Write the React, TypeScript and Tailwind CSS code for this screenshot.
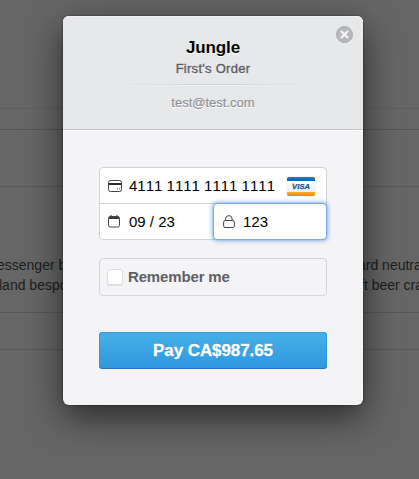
import React from "react";

function Backdrop() {
  return (
    <div className="flex h-[479px] flex-col bg-[#666666] text-[14px] leading-5 text-[#1d1d1d]">
      <div className="h-[109px] shrink-0 border-b border-[#5f5f5f]" />
      <div className="h-[21px] shrink-0 border-b border-[#565656]" />
      <div className="h-[57px] shrink-0 border-b border-[#585858]" />
      <div className="flex h-[126px] shrink-0 justify-between border-b border-[#585858] pt-[68px] whitespace-nowrap">
        <div className="-ml-[3px]">
          <p>essenger b</p>
          <p className="ml-[2px]">land bespo</p>
        </div>
        <div className="w-[60px]">
          <p className="-ml-[1px]">ard neutra</p>
          <p className="ml-[1px]">ft beer cra</p>
        </div>
      </div>
      <div className="h-[37px] shrink-0 border-b border-[#585858]" />
    </div>
  );
}

function CardIcon() {
  return (
    <svg width="14" height="12" viewBox="0 0 14 12" fill="none" className="shrink-0">
      <rect x="0.5" y="0.5" width="13" height="11" rx="2" stroke="#444446" />
      <path d="M1 4h12" stroke="#2b2b2d" strokeWidth="2" />
      <path d="M9.5 8v1.5M11.5 8v1.5" stroke="#777" strokeWidth="0.8" />
    </svg>
  );
}

function CalendarIcon() {
  return (
    <svg width="12" height="13" viewBox="0 0 12 13" fill="none" className="shrink-0">
      <rect x="0.5" y="1.5" width="11" height="10.5" rx="1.8" stroke="#444446" />
      <path d="M1 2h10v2H1z" fill="#39393b" />
      <path d="M3 0v2M9 0v2" stroke="#39393b" />
    </svg>
  );
}

function LockIcon() {
  return (
    <svg width="12" height="13" viewBox="0 0 12 13" fill="none" className="shrink-0">
      <path d="M2.7 5.3V3.800a3.2 3.2 0 0 1 6.400 0v1.500" stroke="#444446" />
      <rect x="0.6" y="5.500" width="10.800" height="7" rx="1.600" stroke="#444446" />
    </svg>
  );
}

function VisaBadge() {
  return (
    <div className="flex h-[19px] w-7 flex-col overflow-hidden rounded-[2px] bg-white shadow-[0_0_1px_#999]">
      <div className="h-1 bg-gradient-to-b from-[#1183d8] to-[#0761b5]" />
      <div className="flex flex-1 items-center justify-center bg-gradient-to-b from-white to-[#e9eef5]">
        <svg width="20" height="9" viewBox="0 0 20 9">
          <text x="1" y="7.300" textLength="18" lengthAdjust="spacing" fontFamily="Liberation Sans, sans-serif" fontSize="7.500" fontWeight="bold" fontStyle="italic" fill="#0f5597" stroke="#0f5597" strokeWidth="0.250">VISA</text>
          <path d="M0.500 1.500h2.700l1 3C3.400 3 2.200 2.200.5 1.500z" fill="#f29a28" />
        </svg>
      </div>
      <div className="h-1 bg-gradient-to-b from-[#ffac2b] to-[#e88410]" />
    </div>
  );
}

export default function App() {
  return (
    <div className="relative h-[479px] w-[419px] overflow-hidden font-['Liberation_Sans',Arial,sans-serif] [font-kerning:none]">
      <Backdrop />
      <div className="absolute top-4 left-[63px] flex h-[389px] w-[300px] flex-col rounded-[6px] bg-[#f4f4f6] shadow-[0_12px_36px_rgba(0,0,0,0.6),0_0_2px_rgba(0,0,0,0.6)]">
        <header className="relative flex h-[114px] shrink-0 flex-col items-center rounded-t-[6px] border-b border-[#c9c9cb] bg-[#e7e8ea] pt-[21px] text-center shadow-[inset_0_1px_0_#f2f2f4,0_1px_0_#ffffff] [text-shadow:0_1px_0_#ffffff]">
          <h1 className="text-[17px] leading-[21px] font-bold tracking-[-0.1px] text-black">Jungle</h1>
          <h2 className="mt-[3px] text-[13px] leading-4 tracking-[0.28px] text-[#5d5e66] [-webkit-text-stroke:0.4px_#5d5e66]">First's Order</h2>
          <div className="mt-[7px] h-[2px] w-[206px] bg-gradient-to-r from-transparent via-[#d0d1d3] to-transparent">
            <div className="mt-px h-px bg-gradient-to-r from-[#e7e8ea] via-[#f3f3f5] to-[#e7e8ea]" />
          </div>
          <p className="mt-[9px] text-[13px] leading-4 text-[#909198] [-webkit-text-stroke:0.2px_#909198]">test@test.com</p>
          <button aria-label="Close" className="absolute top-[10px] right-[10px]">
            <svg width="17" height="17" viewBox="0 0 17 17" className="block">
              <circle cx="8.5" cy="8.5" r="8" fill="#b6b7b9" stroke="#a9aaac" />
              <path d="M5.5 5.5l6 6M11.5 5.5l-6 6" stroke="#f2f2f4" strokeWidth="2.300" strokeLinecap="round" />
            </svg>
          </button>
        </header>
        <main className="flex flex-col px-9 pt-[37px]">
          <div className="h-[73px] rounded-[4px] border border-[#d2d3d7] bg-white text-[15px] text-black">
            <div className="flex h-[36px] items-center border-b border-[#d2d3d7] pr-[11px] pl-2">
              <CardIcon />
              <span className="ml-[7px] pt-[2px]">4111 1111 1111 1111</span>
              <div className="ml-auto pt-px"><VisaBadge /></div>
            </div>
            <div className="flex h-[35px]">
              <div className="flex w-[113px] items-center pl-[8px]">
                <CalendarIcon />
                <span className="ml-[9px] pt-[2px]">09 / 23</span>
              </div>
              <div className="-mt-px -mr-px flex h-[37px] flex-1 items-center rounded-[4px] border border-[#78a9e8] bg-white pl-[9px] shadow-[0_0_5px_#4f91e5]">
                <LockIcon />
                <span className="ml-[8px] pt-[2px]">123</span>
              </div>
            </div>
          </div>
          <div className="mt-[18px] flex h-[38px] items-center rounded-[4px] border border-[#d3d4d8] pl-[7px]">
            <span className="mb-px h-4 w-4 rounded-[3px] border border-[#dcdde0] bg-white shadow-[0_1px_1px_rgba(0,0,0,0.08)]" />
            <span className="ml-[5px] text-[15px] font-bold tracking-[-0.15px] text-[#5e5f67]">Remember me</span>
          </div>
          <button className="mt-9 h-[37px] rounded-[4px] bg-gradient-to-b from-[#45b1e8] to-[#3097de] text-[17px] font-bold tracking-[-0.08px] text-white shadow-[inset_0_1px_0_#389fd8,inset_0_-1px_0_#2377c2,inset_1px_0_0_#3798d7,inset_-1px_0_0_#3798d7] [text-shadow:0_-1px_0_rgba(0,0,0,0.15)] [-webkit-text-stroke:0.3px_white]">
            Pay CA$987.65
          </button>
        </main>
      </div>
    </div>
  );
}
